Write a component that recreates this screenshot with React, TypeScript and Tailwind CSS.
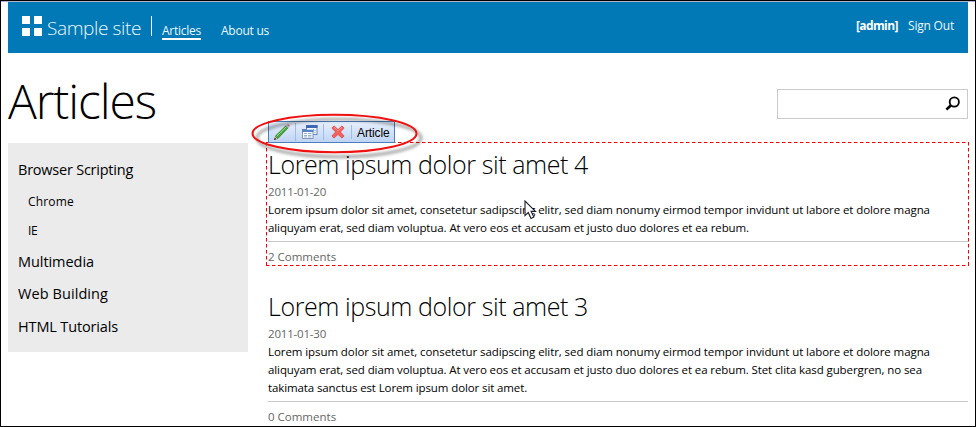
import type { ReactNode } from "react";

function Logo() {
  return (
    <div className="mt-[14px] grid h-5 w-5 grid-cols-2 gap-1">
      <i className="bg-white" />
      <i className="bg-white" />
      <i className="bg-white" />
      <i className="bg-white" />
    </div>
  );
}

function Header() {
  return (
    <header className="flex h-[51px] items-start bg-[#0079b6] pl-[14px] pr-[14px] text-[12px] leading-5 text-[#eef7fc]">
      <Logo />
      <div className="ml-[5px] mt-[12px] w-[95px] text-[19px] font-light leading-7 tracking-[-0.38px]">Sample site</div>
      <div className="ml-[9px] mt-[14px] h-5 w-px bg-white" />
      <nav className="ml-[10px] mt-[19px] flex">
        <a className="h-[19px] w-[39px] border-b-2 border-white tracking-[-0.25px]">Articles</a>
        <a className="ml-5 tracking-[-0.25px]">About us</a>
      </nav>
      <div className="ml-auto mt-[14px] flex">
        <span className="w-[52px] font-bold tracking-[-0.62px] text-white">[admin]</span>
        <span className="w-[46px] tracking-[-0.2px]">Sign Out</span>
      </div>
    </header>
  );
}

function SearchIcon() {
  return (
    <svg width="16" height="16" viewBox="0 0 16 16" fill="none" stroke="#000">
      <circle cx="9.3" cy="6" r="4.6" strokeWidth="1.8" />
      <path d="M6 9.3L1.4 13.6" strokeWidth="2.6" />
    </svg>
  );
}

function Sidebar() {
  return (
    <aside className="flex h-[209px] w-[240px] shrink-0 flex-col bg-[#ebebeb] pl-[10px] pt-[17px] text-[14.5px] leading-5 text-black">
      <a className="tracking-[-0.23px]">Browser Scripting</a>
      <a className="ml-[10px] mt-[12px] text-[12px] leading-5 tracking-[0.15px]">Chrome</a>
      <a className="ml-[10px] mt-[9px] text-[12px] leading-5 tracking-[-0.3px]">IE</a>
      <a className="mt-[11px] tracking-[-0.06px]">Multimedia</a>
      <a className="mt-3 tracking-[0.08px]">Web Building</a>
      <a className="mt-[13px] tracking-[-0.15px]">HTML Tutorials</a>
    </aside>
  );
}

function Article({ title, date, comments, children }: { title: string; date: string; comments: string; children: ReactNode }) {
  return (
    <article className="w-[700px] whitespace-nowrap text-[11.5px] leading-[18px] text-black">
      <h2 className="-mt-px text-[25px] font-light leading-[34px] tracking-[-0.41px]">{title}</h2>
      <div className="mt-[2px] tracking-[-0.2px] text-[#666]">{date}</div>
      {children}
      <div className="mt-[4px] border-t border-[#c8c8c8] pt-[6px] text-[#666]">{comments}</div>
    </article>
  );
}

function PencilIcon() {
  return (
    <svg width="18" height="18" viewBox="0 0 18 18">
      <path d="M1 17L2.2 13.2L4.7 15.7Z" fill="#e8c690" />
      <path d="M1 17L1.8 14.4L3.6 16.2Z" fill="#222" />
      <path d="M2.2 13.2L12.8 2.8L15.1 4.9L4.7 15.7Z" fill="#46a83c" stroke="#28702a" strokeWidth=".6" />
      <path d="M3.6 13.4L13.4 3.7" stroke="#96dc80" strokeWidth="1" />
      <path d="M12.8 2.8L13.8 1.8L16.1 3.9L15.1 4.9Z" fill="#b8b8c0" />
      <path d="M13.8 1.8Q15 .8 16.1 1.8Q17.2 2.8 16.1 3.9Z" fill="#c07078" />
    </svg>
  );
}

function WindowsIcon() {
  return (
    <svg width="16" height="16" viewBox="0 0 16 16">
      <rect x="4.5" y="1.5" width="10.5" height="9" fill="#f4f8ff" stroke="#6686b8" />
      <path d="M4 1H15.5V4H4Z" fill="#3e68b4" />
      <path d="M12 6.5H14M12 8.5H14" stroke="#b4c6e2" />
      <rect x=".5" y="5.5" width="10.5" height="9" fill="#f8fbff" stroke="#8298ba" />
      <path d="M0 5H11.5V8H0Z" fill="#5b83c5" />
      <path d="M5 5.5H11" stroke="#c4d6f0" />
      <path d="M2 9.5H5M6 9.5H9.5M2 11.5H5M6 11.5H9.5M2 13H5M6 13H9.5" stroke="#9cb0cf" />
    </svg>
  );
}

function DeleteIcon() {
  return (
    <svg width="14" height="14" viewBox="0 0 14 14">
      <path d="M3 .9L7 4.6L11 .9L13.1 3L9.4 7L13.1 11L11 13.1L7 9.4L3 13.1L.9 11L4.6 7L.9 3Z" fill="#f4605c" stroke="#e04444" strokeWidth=".8" strokeLinejoin="round" />
      <path d="M3 2.3L7 6L11 2.3" fill="none" stroke="#ff9a90" strokeWidth=".9" />
    </svg>
  );
}

function Toolbar() {
  return (
    <div className="absolute left-[2px] top-[-21px] flex h-[22px] w-[127px] items-center border border-[#4a80bd] bg-linear-to-b from-[#e6effd] via-[#d3e2f9] to-[#bfd4f4]">
      <span className="flex w-[27px] justify-center border-r border-[#9dbce6]"><PencilIcon /></span>
      <span className="flex w-[28px] justify-center border-r border-[#9dbce6]"><WindowsIcon /></span>
      <span className="flex w-[28px] justify-center border-r border-[#9dbce6]"><DeleteIcon /></span>
      <span className="ml-[5px] mt-px font-['Liberation_Sans',Arial,sans-serif] text-[12px] leading-4 tracking-[-0.1px] text-black">Article</span>
    </div>
  );
}

function DashedOutline() {
  return (
    <svg className="absolute left-0 top-0" width="703" height="124" viewBox="0 0 703 124" fill="none" stroke="#ff0000" strokeDasharray="3.5 2.5">
      <path d="M0 .5H703M0 123.5H703M.5 0V124M702.5 0V124" />
    </svg>
  );
}

function Highlight() {
  return (
    <svg className="absolute left-[-20px] top-[-33px]" width="180" height="56" viewBox="0 0 180 56" fill="none">
      <defs>
        <filter id="soft" x="-10%" y="-20%" width="120%" height="150%">
          <feGaussianBlur stdDeviation="1.8" />
        </filter>
      </defs>
      <ellipse cx="93" cy="29" rx="82" ry="18.7" stroke="#000" strokeOpacity=".34" strokeWidth="3" filter="url(#soft)" />
      <ellipse cx="88.5" cy="24.5" rx="82" ry="18.7" stroke="#f01010" strokeWidth="2" />
    </svg>
  );
}

function Cursor() {
  return (
    <svg className="absolute left-[258px] top-[58px]" width="14" height="21" viewBox="0 0 14 21">
      <path d="M1 1V15.6L4.3 12.5L7 18.4L9.8 17.1L7.1 11.4H11.5Z" fill="#fff" stroke="#1c1c30" strokeWidth="1.1" />
    </svg>
  );
}

export default function App() {
  return (
    <div className="h-[427px] w-[976px] overflow-hidden border border-black bg-white pl-[7px] pr-[7px] font-['Open_Sans','Noto_Sans',sans-serif]">
      <div className="-ml-[7px] -mr-[7px] h-px bg-[#b5b5c9]" />
      <Header />
      <div className="flex h-[90px] items-start justify-between pt-[18px]">
        <h1 className="text-[48px] font-light leading-[60px] tracking-[-1.1px] text-black">Articles</h1>
        <div className="mt-[18px] flex h-[30px] w-[191px] items-center justify-end border border-[#ccc] pr-[6px]">
          <SearchIcon />
        </div>
      </div>
      <div className="flex">
        <Sidebar />
        <main className="ml-[18px] -mt-px flex flex-col">
          <div className="relative h-[124px] w-[703px] pl-[2px] pt-[6px]">
            <Article title="Lorem ipsum dolor sit amet 4" date="2011-01-20" comments="2 Comments">
              <p className="tracking-[-0.08px]">Lorem ipsum dolor sit amet, consetetur sadipscing elitr, sed diam nonumy eirmod tempor invidunt ut labore et dolore magna</p>
              <p className="tracking-[-0.1px]">aliquyam erat, sed diam voluptua. At vero eos et accusam et justo duo dolores et ea rebum.</p>
            </Article>
            <DashedOutline />
            <Toolbar />
            <Highlight />
            <Cursor />
          </div>
          <div className="pl-[2px] pt-6">
            <Article title="Lorem ipsum dolor sit amet 3" date="2011-01-30" comments="0 Comments">
              <p className="tracking-[-0.08px]">Lorem ipsum dolor sit amet, consetetur sadipscing elitr, sed diam nonumy eirmod tempor invidunt ut labore et dolore magna</p>
              <p className="tracking-[-0.104px]">aliquyam erat, sed diam voluptua. At vero eos et accusam et justo duo dolores et ea rebum. Stet clita kasd gubergren, no sea</p>
              <p className="tracking-[-0.11px]">takimata sanctus est Lorem ipsum dolor sit amet.</p>
            </Article>
          </div>
        </main>
      </div>
    </div>
  );
}
